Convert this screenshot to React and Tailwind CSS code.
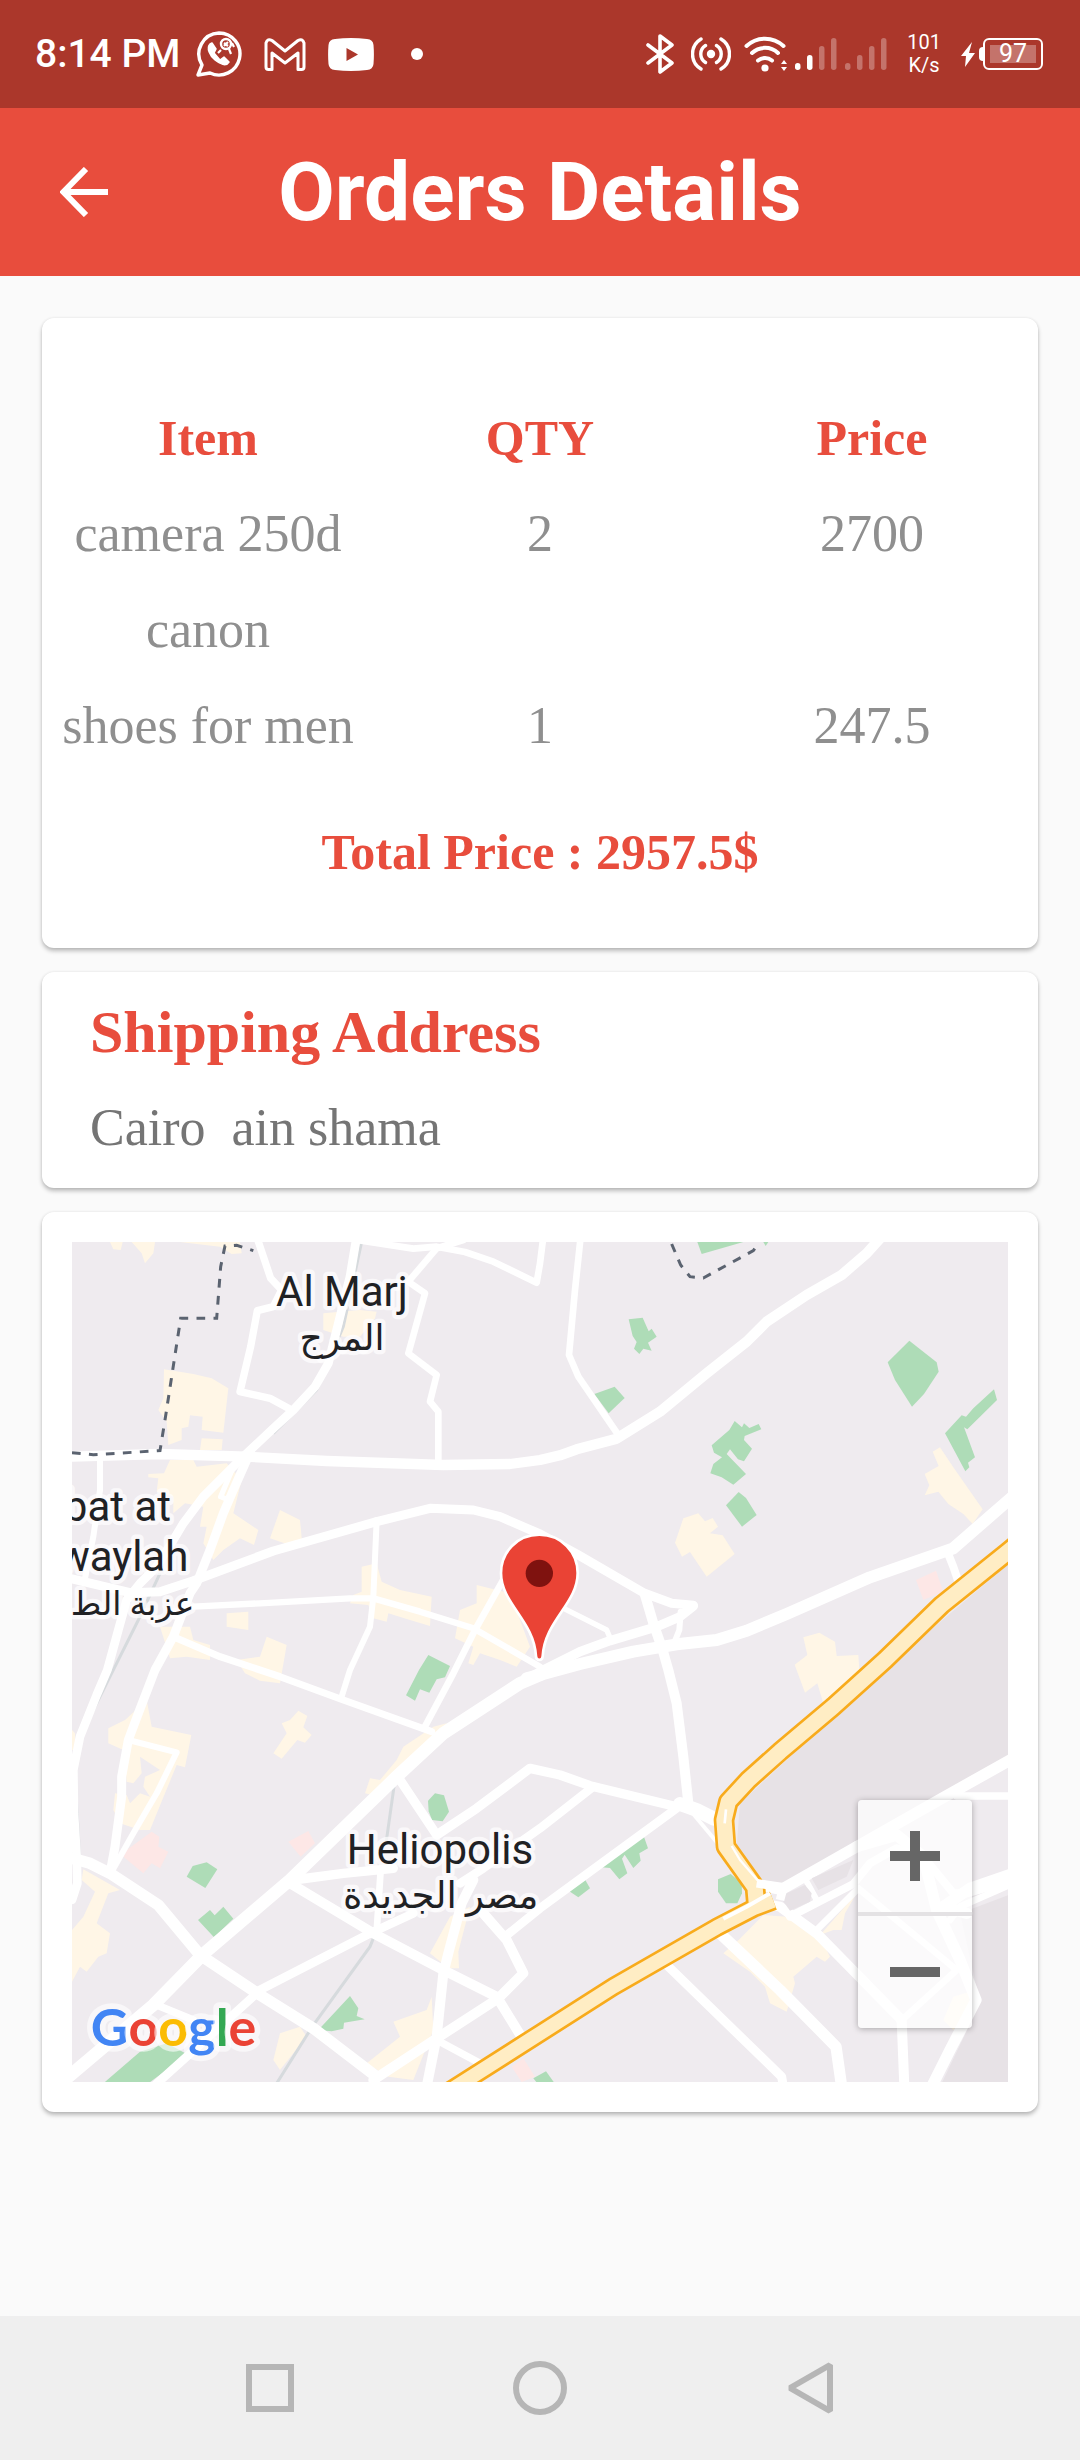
const road = (d, w) => ({ d, w });

const ROADS = [
  road("590,20 632,145 665,180 640,230 592,242 572,350 540,485 630,505 695,540", 22),
  road("890,20 870,140 845,240 825,320 805,400 765,470 700,540 640,595 550,680 490,740 430,800 370,880 340,930 290,1010 240,1060 200,1110 175,1200 142,1320 110,1395 60,1520 40,1620 42,1750 50,1880 52,1960 36,2010", 26),
  road("560,690 520,780 490,850 450,960 410,1060 390,1090 340,1220 285,1320 235,1450 205,1530 185,1640 185,1700 165,1850 152,1920", 27),
  road("520,710 482,800 510,812", 16),
  road("30,680 300,672 560,680 800,693 1150,705 1350,702 1440,690 1500,676 1550,658 1670,626 1800,545 1940,430 2060,335 2120,275 2240,195 2345,135 2420,70 2465,20", 31),
  road("890,30 1060,56 1130,50 1215,66 1300,95 1430,158 1440,100 1450,20", 20),
  road("1210,30 1130,55 1045,155 1095,190 1045,370 1130,435 1110,515 1135,545 1135,690", 20),
  road("1562,20 1545,180 1527,375 1555,440 1675,615", 20),
  road("30,1045 210,1088 300,1085 400,1052 640,963 950,875 1110,835 1240,840 1320,860 1440,912 1550,972 1750,1088 1835,1120 1900,1126", 27),
  road("120,690 120,780 100,920 75,1045", 18),
  road("400,1130 600,1120 870,1105 940,1105 1080,1145 1240,1195 1440,1310", 19),
  road("950,870 940,1100 930,1190 870,1320 845,1400", 18),
  road("1335,1040 1245,1200 1180,1330 1092,1495", 20),
  road("340,1220 480,1280 660,1340 850,1410 1115,1505", 21),
  road("20,2545 280,2325 430,2172 690,1950 1010,1640 1150,1510 1380,1360 1440,1325 1560,1265 1650,1232 1790,1190 1860,1160 1900,1128", 28),
  road("20,2545 280,2325 430,2172 690,1950 1010,1640 1150,1510 1380,1360 1440,1335", 38),
  road("1400,1345 1560,1302 1720,1265 1850,1243 1970,1230 2060,1202 2180,1152 2430,1042 2680,955 2760,885 2860,798", 36),
  road("2660,960 2680,1010 2702,1075", 24),
  road("1755,1095 1780,1180 1808,1260 1825,1320 1850,1420 1870,1580 1885,1720", 30),
  road("1862,1145 1858,1200 1840,1245", 18),
  road("1505,1132 1640,1200 1655,1235", 16),
  road("700,1950 850,1930 1000,1915", 28),
  road("1020,1650 1080,1740 1130,1815 1250,1735 1410,1615 1500,1635 1590,1667 1850,1730", 28),
  road("1200,1960 1270,1915 1440,1795 1600,1670", 26),
  road("1335,2120 1440,2035 1850,1735", 26),
  road("1270,2050 1340,2130 1390,2230 1315,2305 1130,2425 940,2550", 30),
  road("690,1960 940,2110 1140,2215 1310,2300 1390,2430", 30),
  road("590,2285 930,2110 1060,2050", 26),
  road("36,1885 90,1900 150,1930 295,2025 420,2175 600,2295 760,2395 950,2540", 34),
  road("962,1920 950,2105", 20),
  road("1240,1950 1205,2020 1165,2170 1150,2230 1130,2420 1100,2570", 30),
  road("290,2325 400,2370", 22),
  road("590,2290 480,2390 280,2570", 26),
  road("1130,2430 1260,2500", 22),
  road("205,1530 350,1567 290,1690 220,1810 155,1925", 18),
  road("1860,1722 1910,1740 1962,1766", 42),
  road("1890,1740 1990,1860", 12),
  road("2110,1968 2165,1978 2640,1708 2860,1585", 34),
  road("2690,1698 2860,1698", 22),
  road("2190,2060 2380,1962 2430,1900 2510,1855 2590,1880 2680,1990 2720,1990 2860,1950", 24),
  road("2240,1955 2270,2010", 18),
  road("2100,2020 2160,2030 2270,2110 2525,2370 2533,2570", 30),
  road("2265,2105 2395,1975 2690,2220 2520,2375", 20),
  road("2390,1850 2510,1815 2590,1880 2630,2040 2700,2190 2748,2310 2670,2460 2610,2580", 34),
  road("2860,1930 2730,1975 2650,2030 2720,2050", 34),
  road("2860,1960 2700,2030 2670,2070", 20),
  road("1980,2110 2160,2280 2328,2450 2345,2570", 34),
  road("1815,2200 2165,2540 2170,2570", 27),
];

const GREENS = [
  "1912,36 2050,36 1925,72", "2110,36 2125,36 2117,48",
  "1706,268 1748,263 1766,304 1775,296 1790,320 1764,338 1775,362 1750,356 1738,372 1722,356 1730,336 1718,318",
  "1603,492 1664,470 1694,504 1646,550",
  "2483,397 2548,332 2630,397 2636,425 2592,492 2556,530 2505,450",
  "2655,610 2705,556 2718,560 2740,535 2802,478 2811,510 2722,598 2712,592 2745,682 2724,698 2728,712 2716,724",
  "1955,646 2008,600 2024,573 2046,592 2052,580 2068,594 2096,582 2104,598 2054,618 2052,630 2076,656 2052,694 2034,688 2010,658 2000,672 2058,732 2020,764 1985,742 1951,730 1960,702 1986,682 1962,668",
  "1998,826 2036,786 2058,804 2090,855 2046,890",
  "1077,1320 1105,1275 1170,1308 1155,1342 1130,1348 1108,1388 1080,1378 1065,1412 1038,1396",
  "1104,1712 1125,1690 1152,1696 1167,1745 1148,1774 1116,1770 1106,1744",
  "380,1940 398,1908 440,1897 472,1918 436,1974",
  "414,2070 450,2040 464,2056 490,2030 520,2066 462,2122",
  "775,2400 870,2298 895,2335 890,2358 914,2368 852,2378 850,2396 815,2404",
  "130,2560 240,2465 320,2440 376,2470 360,2490 265,2560",
  "1420,2545 1458,2524 1484,2560 1432,2560",
  "1528,1984 1576,1950 1590,1975 1555,2002",
  "1625,1912 1750,1815 1764,1855 1738,1870 1742,1892 1720,1914 1694,1874 1686,1886 1702,1930 1678,1948 1650,1914",
  "1974,1948 2012,1932 2045,1960 2046,1990 2032,2020 1998,2020 1974,1985",
];

const CREAMS = [
  "150,36 188,36 182,60 160,58", "215,36 285,36 280,70 255,100 245,70",
  "360,36 540,36 545,70 515,72 480,50",
  "312,418 400,432 455,445 505,475 490,608 425,600 428,560 390,556 385,590 365,595 365,630 325,645 320,575 295,540 310,505",
  "425,625 488,628 485,660 420,660",
  "330,690 400,690 410,710 500,700 545,750 520,850 595,900 582,945 540,925 490,960 460,990 430,940 440,890 420,890 430,830 375,820 340,850 340,800 290,785 295,745 265,742 265,732 312,730",
  "660,840 720,870 726,935 680,942 630,925", "500,1150 565,1145 565,1200 500,1190",
  "790,250 900,240 950,245 945,265 900,320 850,320 790,300",
  "905,1010 950,1000 965,1055 1020,1080 1115,1100 1110,1188 1050,1170 985,1150 980,1175 940,1165 925,1125 870,1120 880,1095 905,1085",
  "1250,1065 1350,1090 1410,1250 1370,1310 1320,1290 1260,1270 1240,1305 1225,1300 1240,1250 1185,1225 1200,1140 1250,1120",
  "300,1190 390,1190 400,1230 450,1245 450,1290 380,1280 330,1285", "530,1290 600,1280 620,1220 680,1245 660,1360 600,1352 555,1330",
  "195,1470 260,1410 275,1490 394,1515 375,1612 350,1605 315,1690 270,1800 240,1800 180,1780 160,1740 165,1690 200,1695 210,1720 240,1690 270,1700 250,1670 255,1640 300,1620 240,1580 245,1630 220,1660 200,1655 190,1560 145,1540 145,1495",
  "640,1570 680,1510 665,1480 690,1470 715,1442 742,1458 730,1492 755,1515 735,1538 712,1530 665,1586",
  "1010,1590 1030,1550 1120,1490 1160,1480 1160,1510 1050,1620 960,1700 915,1690 930,1645 960,1650",
  "36,1500 45,1510 45,1560 36,1560", "70,1918 180,1980 145,1990 110,2080 150,2110 140,2170 115,2180 80,2225 60,2210 36,2255 36,2100 70,2060 105,1985 65,1950",
  "1170,2060 1230,2030 1195,2165 1197,2215 1165,2215 1110,2170",
  "1000,2375 1100,2340 1115,2300 1120,2400 1080,2500 1060,2550 985,2540 920,2500 1020,2420",
  "640,2490 660,2410 720,2390 740,2420 660,2520",
  "1845,938 1870,865 1915,850 1935,874 1958,864 1974,890 1950,910 1988,916 2024,972 1940,1040 1890,966 1866,980",
  "2594,732 2636,708 2618,665 2640,652 2680,712 2768,838 2738,882 2710,852 2665,822 2635,785 2594,796 2608,766",
  "2204,1304 2242,1275 2230,1222 2278,1208 2325,1235 2330,1278 2395,1275 2398,1320 2290,1420 2272,1360 2235,1388",
  "2036,2130 2110,2055 2180,2060 2280,2120 2310,2180 2295,2195 2270,2180 2200,2240 2205,2260 2180,2345 2130,2320 2115,2270 2070,2225 1990,2170",
  "2280,2115 2390,1990 2355,2050 2345,2100 2320,2100", "2650,2370 2680,2300 2730,2285 2725,2350 2680,2400",
];

const PINKS = [
  "200,1860 275,1805 298,1820 295,1850 325,1865 300,1915 275,1900 250,1930 190,1880",
  "685,1835 745,1803 765,1840 722,1880", "1355,2510 1390,2485 1425,2540 1385,2556",
  "2568,1050 2628,1022 2650,1085 2590,1110",
];

const HIGHWAY_A = "2868,945 2844,965 2645,1125 2475,1290 2320,1430 2160,1565 2065,1650 2005,1715 1992,1770 1998,1850 2085,1972 2090,2030";
const HIGHWAY_B = "2140,2012 2080,2035 1970,2092 1660,2270 1440,2410 1170,2582";

function MapLabel({ x, y, anchor = "middle", size = 126, lang, children }) {
  return (
    <text
      x={x}
      y={y}
      textAnchor={anchor}
      fontSize={size}
      lang={lang}
      fill="#202124"
      stroke="#ffffff"
      strokeOpacity="0.7"
      strokeWidth="26"
      strokeLinejoin="round"
      paintOrder="stroke"
      className="font-[Roboto,'DejaVu_Sans',sans-serif]"
    >
      {children}
    </text>
  );
}

function CityMap() {
  return (
    <svg viewBox="36 36 2808 2520" preserveAspectRatio="xMidYMid slice" className="block h-[840px] w-full" role="img" aria-label="Map of the shipping address">
      <rect x="-2000" y="0" width="7000" height="2600" fill="#efebef" />
      <g fill="#e7e2e6">
        <polygon points="2860,990 2470,1320 2040,1720 2030,1850 2110,1960 2170,1960 2860,1580" />
        <polygon points="2700,2050 2860,1990 2860,2570 2640,2570 2760,2320" />
      </g>
      <g fill="#fff6e6">{CREAMS.map((p) => <polygon key={p} points={p} />)}</g>
      <g fill="#fde7e6">{PINKS.map((p) => <polygon key={p} points={p} />)}</g>
      <g fill="#aedcb7">{GREENS.map((p) => <polygon key={p} points={p} />)}</g>
      <g fill="none" stroke="#d6dadd" strokeWidth="9">
        <polyline points="905,36 850,290 770,480 640,610" />
        <polyline points="300,1030 235,1170 165,1310 60,1520 44,1620 56,1830 58,1880" />
        <polyline points="1002,1670 978,1840" />
        <polyline points="940,2125 930,2150 760,2385 650,2560" />
      </g>
      <g fill="none" stroke="#ffffff" strokeLinejoin="round" strokeLinecap="round">
        {ROADS.map((r) => <polyline key={r.d} points={r.d} strokeWidth={r.w} />)}
      </g>
      <polygon points="2165,2008 2180,1990 2235,1965 2255,1990 2250,2015 2190,2042" fill="#e7e2e6" />
      <polygon points="2255,1945 2380,1890 2360,1940 2275,1980" fill="#e7e2e6" />
      <g fill="none" strokeLinejoin="round">
        <polyline points={HIGHWAY_B} stroke="#f8ab1c" strokeWidth="58" />
        <polyline points={HIGHWAY_A} stroke="#f8ab1c" strokeWidth="62" />
        <polyline points={HIGHWAY_A} stroke="#ffedc4" strokeWidth="46" />
        <polyline points={HIGHWAY_B} stroke="#ffedc4" strokeWidth="42" />
        <polyline points="1998,1738 1994,1780" stroke="#ffffff" strokeWidth="8" />
        <polyline points="2015,1848 2040,1890 2105,1965" stroke="#ffffff" strokeWidth="7" />
        <polyline points="1990,2066 2060,2030 2130,1990" stroke="#ffffff" strokeWidth="12" />
        <polyline points="2090,1960 2170,1972 2160,2010" stroke="#ffffff" strokeWidth="26" />
      </g>
      <g fill="none" stroke="#5b6370" strokeWidth="9" strokeDasharray="26 25">
        <polyline points="36,668 100,674 300,662 315,570 362,265 470,265 482,110 495,48 530,46 580,62" />
        <polyline points="1835,42 1862,105 1890,140 1930,144 2080,62 2098,36" />
      </g>
      <MapLabel x="846" y="228">Al Marj</MapLabel>
      <MapLabel x="846" y="360" size={108} lang="ar">المرج</MapLabel>
      <MapLabel x="333" y="874" anchor="end">bat at</MapLabel>
      <MapLabel x="385" y="1022" anchor="end">waylah</MapLabel>
      <MapLabel x="403" y="1155" anchor="end" size={99} lang="ar">عزبة الط</MapLabel>
      <MapLabel x="1140" y="1902">Heliopolis</MapLabel>
      <MapLabel x="1142" y="2034" size={111} lang="ar">مصر الجديدة</MapLabel>
      <path
        d="M1438 914c-66 0-115 52-115 115 0 92 99 142 105 250 1 14 19 14 20 0 6-108 105-158 105-250 0-63-49-115-115-115z"
        fill="#ea4335"
        stroke="#ffffff"
        strokeWidth="8"
      />
      <circle cx="1438" cy="1030" r="41" fill="#7f120f" />
      <text x="92" y="2448" fontSize="156" fontWeight="700" stroke="#ffffff" strokeOpacity="0.6" strokeWidth="34" strokeLinejoin="round" paintOrder="stroke" className="font-[Lato,sans-serif]">
        <tspan fill="#4285f4">G</tspan>
        <tspan fill="#ea4335">o</tspan>
        <tspan fill="#fbbc04">o</tspan>
        <tspan fill="#4285f4">g</tspan>
        <tspan fill="#34a853">l</tspan>
        <tspan fill="#ea4335">e</tspan>
      </text>
    </svg>
  );
}

function Signal({ strength }) {
  const bars = [
    { x: 0, y: 25, h: 7 },
    { x: 12, y: 17, h: 15 },
    { x: 24, y: 8, h: 24 },
    { x: 36, y: 0, h: 32 },
  ];
  return (
    <svg viewBox="0 0 42 32" className="h-8 w-[42px]" aria-hidden="true">
      {bars.map((b, i) => (
        <rect key={b.x} x={b.x} y={b.y} width="5.500" height={b.h} rx="2.700" fill="#fff" fillOpacity={i < strength ? 1 : 0.3} />
      ))}
    </svg>
  );
}

function StatusBar() {
  return (
    <div className="flex h-[108px] items-center justify-between bg-[#ab372b] pr-[37px] pl-[35px] font-[Roboto,sans-serif] text-white">
      <div className="flex items-center">
        <span className="text-[39px] leading-none font-medium">8:14 PM</span>
        <svg viewBox="0 0 46 46" className="ml-4 size-[46px]" fill="none" stroke="#fff" aria-hidden="true">
          <path d="M23 2a21 21 0 1 1-9 40L2 44l4-10A21 21 0 0 1 23 2z" strokeWidth="3.4" strokeLinejoin="round" />
          <path d="M14 13c-4 4 0 12 5 16s11 7 14 2l-5-5-4 3-6-7 2-4-4-6z" fill="#fff" strokeWidth="1.5" strokeLinejoin="round" />
          <circle cx="30" cy="13" r="5" strokeWidth="2.4" />
          <path d="M25 19l-3 3M33 18l2 5M36 12l2 4M28 12l4 3M32 11l-4 4" strokeWidth="2.2" />
        </svg>
        <svg viewBox="0 0 42 33" className="ml-[22px] h-[33px] w-[42px]" fill="none" stroke="#fff" strokeWidth="3" strokeLinejoin="round" aria-hidden="true">
          <path d="M2 5v24q0 2.500 2.500 2.500H8V15l13 10 13-10v16.500h3.500q2.500 0 2.500-2.500V5q-1.500-5-6-2.500L21 13 8 2.500Q3.500 0 2 5z" />
        </svg>
        <svg viewBox="0 0 46 33" className="ml-[22px] h-[33px] w-[46px]" aria-hidden="true">
          <path d="M7 1Q23-1 39 1q6 .5 6.500 6 .8 9.500 0 19-.5 5.500-6.500 6-16 2-32 0-6-.5-6.500-6-.8-9.500 0-19Q1 1.500 7 1zM18.500 10v13L30 16.500z" fill="#fff" />
        </svg>
        <span className="ml-[37px] size-3 rounded-full bg-white" />
      </div>
      <div className="flex items-center">
        <svg viewBox="0 0 28 40" className="h-10 w-7" fill="none" stroke="#fff" strokeWidth="3.600" strokeLinejoin="round" strokeLinecap="round" aria-hidden="true">
          <path d="M2 11l24 18-12 9V2l12 9L2 29" />
        </svg>
        <svg viewBox="0 0 40 34" className="ml-[17px] h-[34px] w-10" fill="none" stroke="#fff" strokeWidth="3.400" strokeLinecap="round" aria-hidden="true">
          <circle cx="20" cy="17" r="4.200" fill="#fff" stroke="none" />
          <path d="M14.500 8.500a10 10 0 0 0 0 17M25.500 8.500a10 10 0 0 1 0 17M10 2a17.500 17.500 0 0 0 0 30M30 2a17.500 17.500 0 0 1 0 30" />
        </svg>
        <svg viewBox="0 0 44 36" className="ml-[13px] h-9 w-11" fill="none" stroke="#fff" strokeWidth="4" strokeLinecap="round" aria-hidden="true">
          <path d="M2.500 10a27 27 0 0 1 37 0M8 17a19 19 0 0 1 26 0M14 24.500a11 11 0 0 1 14 0" />
          <circle cx="21" cy="32" r="3.600" fill="#fff" stroke="none" />
          <path d="M37 28l3-4 3 4zM37 31l3 4 3-4z" fill="#fff" stroke="none" />
        </svg>
        <div className="ml-[7px] flex gap-[8px]">
          <Signal strength={2} />
          <Signal strength={0} />
        </div>
        <div className="ml-5 text-center text-[20px] leading-[23px]">
          <div>101</div>
          <div>K/s</div>
        </div>
        <svg viewBox="0 0 14 25" className="ml-5 h-[25px] w-[14px]" fill="#fff" aria-hidden="true">
          <path d="M11 0L0 14h5L4 25l10-14H8z" />
        </svg>
        <span className="ml-1 h-[14px] w-1 rounded-l bg-white" />
        <span className="flex h-8 w-[60px] items-center rounded-md border-2 border-white p-[5px]">
          <span className="flex h-full w-full items-center justify-center bg-white/30 text-[25px]">97</span>
        </span>
      </div>
    </div>
  );
}

const ORDER = [
  { item: "camera 250d canon", qty: "2", price: "2700" },
  { item: "shoes for men", qty: "1", price: "247.5" },
];

const CARD = "rounded-xl bg-white shadow-[0_3px_4px_rgba(0,0,0,0.25),0_0_3px_rgba(0,0,0,0.08)]";

export default function App() {
  return (
    <div className="flex min-h-screen flex-col bg-[#fafafa] font-['Liberation_Serif',serif]">
      <StatusBar />
      <header className="grid h-[168px] grid-cols-[168px_1fr_168px] items-center bg-[#e84d3d]">
        <button type="button" aria-label="Back" className="flex size-[168px] items-center justify-center">
          <svg viewBox="0 0 48 50" className="h-[50px] w-12" fill="none" stroke="#fff" strokeWidth="6" aria-hidden="true">
            <path d="M26 2L3.500 25 26 48M3.500 25H48" />
          </svg>
        </button>
        <h1 className="text-center font-[Roboto,sans-serif] text-[82px] leading-none font-bold text-white">Orders Details</h1>
      </header>

      <main className="flex flex-1 flex-col gap-6 px-[42px] pt-[42px] pb-[204px]">
        <section className={`${CARD} pt-[72px] pb-12`}>
          <table className="w-full table-fixed text-center text-[52px] leading-[96px]">
            <thead>
              <tr className="text-[50px] text-[#e84d3d]">
                <th className="font-bold">Item</th>
                <th className="font-bold">QTY</th>
                <th className="font-bold">Price</th>
              </tr>
            </thead>
            <tbody className="text-[#8f8f8f]">
              {ORDER.map((o) => (
                <tr key={o.item} className="align-top">
                  <td>{o.item}</td>
                  <td>{o.qty}</td>
                  <td>{o.price}</td>
                </tr>
              ))}
            </tbody>
          </table>
          <p className="pt-[30px] text-center text-[50px] leading-[96px] font-bold text-[#e84d3d]">Total Price : 2957.5$</p>
        </section>

        <section className={`${CARD} px-12 pt-3 pb-3`}>
          <h2 className="text-[60px] leading-24 font-bold text-[#e84d3d]">Shipping Address</h2>
          <p className="text-[52px] leading-24 whitespace-pre text-[#757575]">Cairo  ain shama</p>
        </section>

        <section className={`${CARD} p-[30px]`}>
          <div className="relative overflow-hidden">
            <CityMap />
            <div className="absolute right-9 bottom-[54px] flex w-[114px] flex-col rounded-sm bg-white/75 shadow-[0_1px_6px_rgba(0,0,0,0.3)]">
              <button type="button" aria-label="Zoom in" className="flex h-[116px] items-center justify-center border-b-4 border-[#e4e2e4]">
                <svg viewBox="0 0 50 50" className="size-[50px]" fill="#666" aria-hidden="true"><path d="M20 0h10v20h20v10H30v20H20V30H0V20h20z" /></svg>
              </button>
              <button type="button" aria-label="Zoom out" className="flex h-[112px] items-center justify-center">
                <svg viewBox="0 0 50 10" className="h-[10px] w-[50px]" fill="#666" aria-hidden="true"><path d="M0 0h50v10H0z" /></svg>
              </button>
            </div>
          </div>
        </section>
      </main>

      <nav className="grid h-36 grid-cols-3 bg-[#efefef] px-[135px]">
        <button type="button" aria-label="Recent apps" className="flex items-center justify-center">
          <svg viewBox="0 0 48 48" className="size-12" fill="none" stroke="#b6b6b6" strokeWidth="6" aria-hidden="true"><path d="M3 3h42v42H3z" /></svg>
        </button>
        <button type="button" aria-label="Home" className="flex items-center justify-center">
          <svg viewBox="0 0 54 54" className="size-[54px]" fill="none" stroke="#b6b6b6" strokeWidth="6" aria-hidden="true"><circle cx="27" cy="27" r="24" /></svg>
        </button>
        <button type="button" aria-label="Back to previous screen" className="flex items-center justify-center">
          <svg viewBox="0 0 46 52" className="h-[52px] w-[46px]" fill="none" stroke="#b6b6b6" strokeWidth="6" strokeLinejoin="bevel" aria-hidden="true"><path d="M43 3v46L3 26z" /></svg>
        </button>
      </nav>
    </div>
  );
}
